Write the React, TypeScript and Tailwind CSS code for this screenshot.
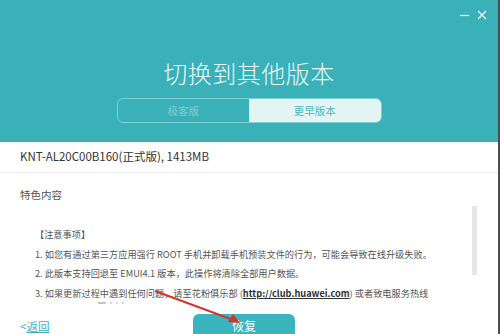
import React from 'react'

const font = '"Noto Sans CJK SC", "Noto Sans", sans-serif'

const notes = [
  '1. 如您有通过第三方应用强行 ROOT 手机并卸载手机预装文件的行为，可能会导致在线升级失败。',
  '2. 此版本支持回退至 EMUI4.1 版本，此操作将清除全部用户数据。',
]

export default function App() {
  return (
    <div
      className="relative flex h-[334px] w-[500px] flex-col overflow-hidden border-r-2 border-[#4a4f52] bg-white"
      style={{fontFamily: font}}
    >
      {/* Header */}
      <div className="relative flex h-[142px] shrink-0 flex-col items-center bg-[#3ab1b8] pt-[57px]">
        <div className="absolute right-[11px] top-[10px] flex items-center gap-[8px]">
          <svg width="9" height="10" viewBox="0 0 9 10">
            <path d="M0 5.5h9" stroke="#f2fbfb" strokeWidth="1.2" />
          </svg>
          <svg width="10" height="10" viewBox="0 0 10 10">
            <path d="M1 1l8 8M9 1l-8 8" stroke="#f2fbfb" strokeWidth="1.2" />
          </svg>
        </div>
        <h1 className="h-8 text-[24px] font-light leading-8 tracking-[0.5px] text-[#eaf8f9]">切换到其他版本</h1>
        <div className="mt-[9px] flex h-[25px] w-[265px] overflow-hidden rounded-[6px] border border-[#7fd0d4]">
          <div className="flex flex-1 items-center justify-center text-[10.5px] text-[#7fcfd3]">极客版</div>
          <div className="flex flex-1 items-center justify-center bg-[#e4f4f5] text-[10.5px] text-[#4fb7bd]">更早版本</div>
        </div>
      </div>

      {/* Version row */}
      <div className="flex h-[31px] shrink-0 items-center border-b border-[#eeeeee] px-[20px] text-[11.5px] text-[#333]">
        KNT-AL20C00B160(正式版), 1413MB
      </div>

      {/* Content */}
      <div className="relative flex-1 pl-[20px] pt-[14px]">
        <div className="text-[10.5px] leading-[16px] text-[#555]">特色内容</div>
        <div className="mt-[22px] pl-[15px] text-[9.2px] leading-[19.7px] text-[#555]">
          <div>【注意事项】</div>
          {notes.map((n, i) => (
            <div key={i} className="whitespace-nowrap">{n}</div>
          ))}
          <div className="whitespace-nowrap">
            3. 如果更新过程中遇到任何问题，请至花粉俱乐部 (
            <span className="font-bold text-[#333] underline">http://club.huawei.com</span>) 或者致电服务热线
          </div>
        </div>
        <div className="ml-[78px] mt-[-2px] flex items-center gap-[4px]">
          <span className="h-[2px] w-[8px] bg-[#c4c4c4]" />
          <span className="h-[2px] w-[2px] bg-[#d8d8d8]" />
          <span className="h-[2px] w-[2px] bg-[#d8d8d8]" />
          <span className="h-[2px] w-[2px] bg-[#d8d8d8]" />
        </div>
        {/* scrollbar thumb */}
        <div className="absolute right-[21px] top-[33px] h-[69px] w-[5px] bg-[#e6e6e6]" />
      </div>

      {/* Footer */}
      <div className="flex h-[20px] shrink-0 items-end justify-between pl-[20px]">
        <a className="mb-[1px] text-[11.5px] leading-[14px] text-[#3ab1b8]">
          &lt;<span className="underline">返回</span>
        </a>
        <div className="mr-[203px] flex h-[20px] w-[102px] items-center justify-center rounded-t-[6px] bg-[#3ab5bd] pt-[4px] text-[12px] text-white">
          恢复
        </div>
      </div>

      {/* red annotation arrow */}
      <svg className="pointer-events-none absolute left-0 top-0" width="500" height="334">
        <path d="M155 291 L236 321" stroke="#d5322e" strokeWidth="2" />
        <path d="M240 323 L228 322 L233 314 Z" fill="#d5322e" />
      </svg>
    </div>
  )
}
